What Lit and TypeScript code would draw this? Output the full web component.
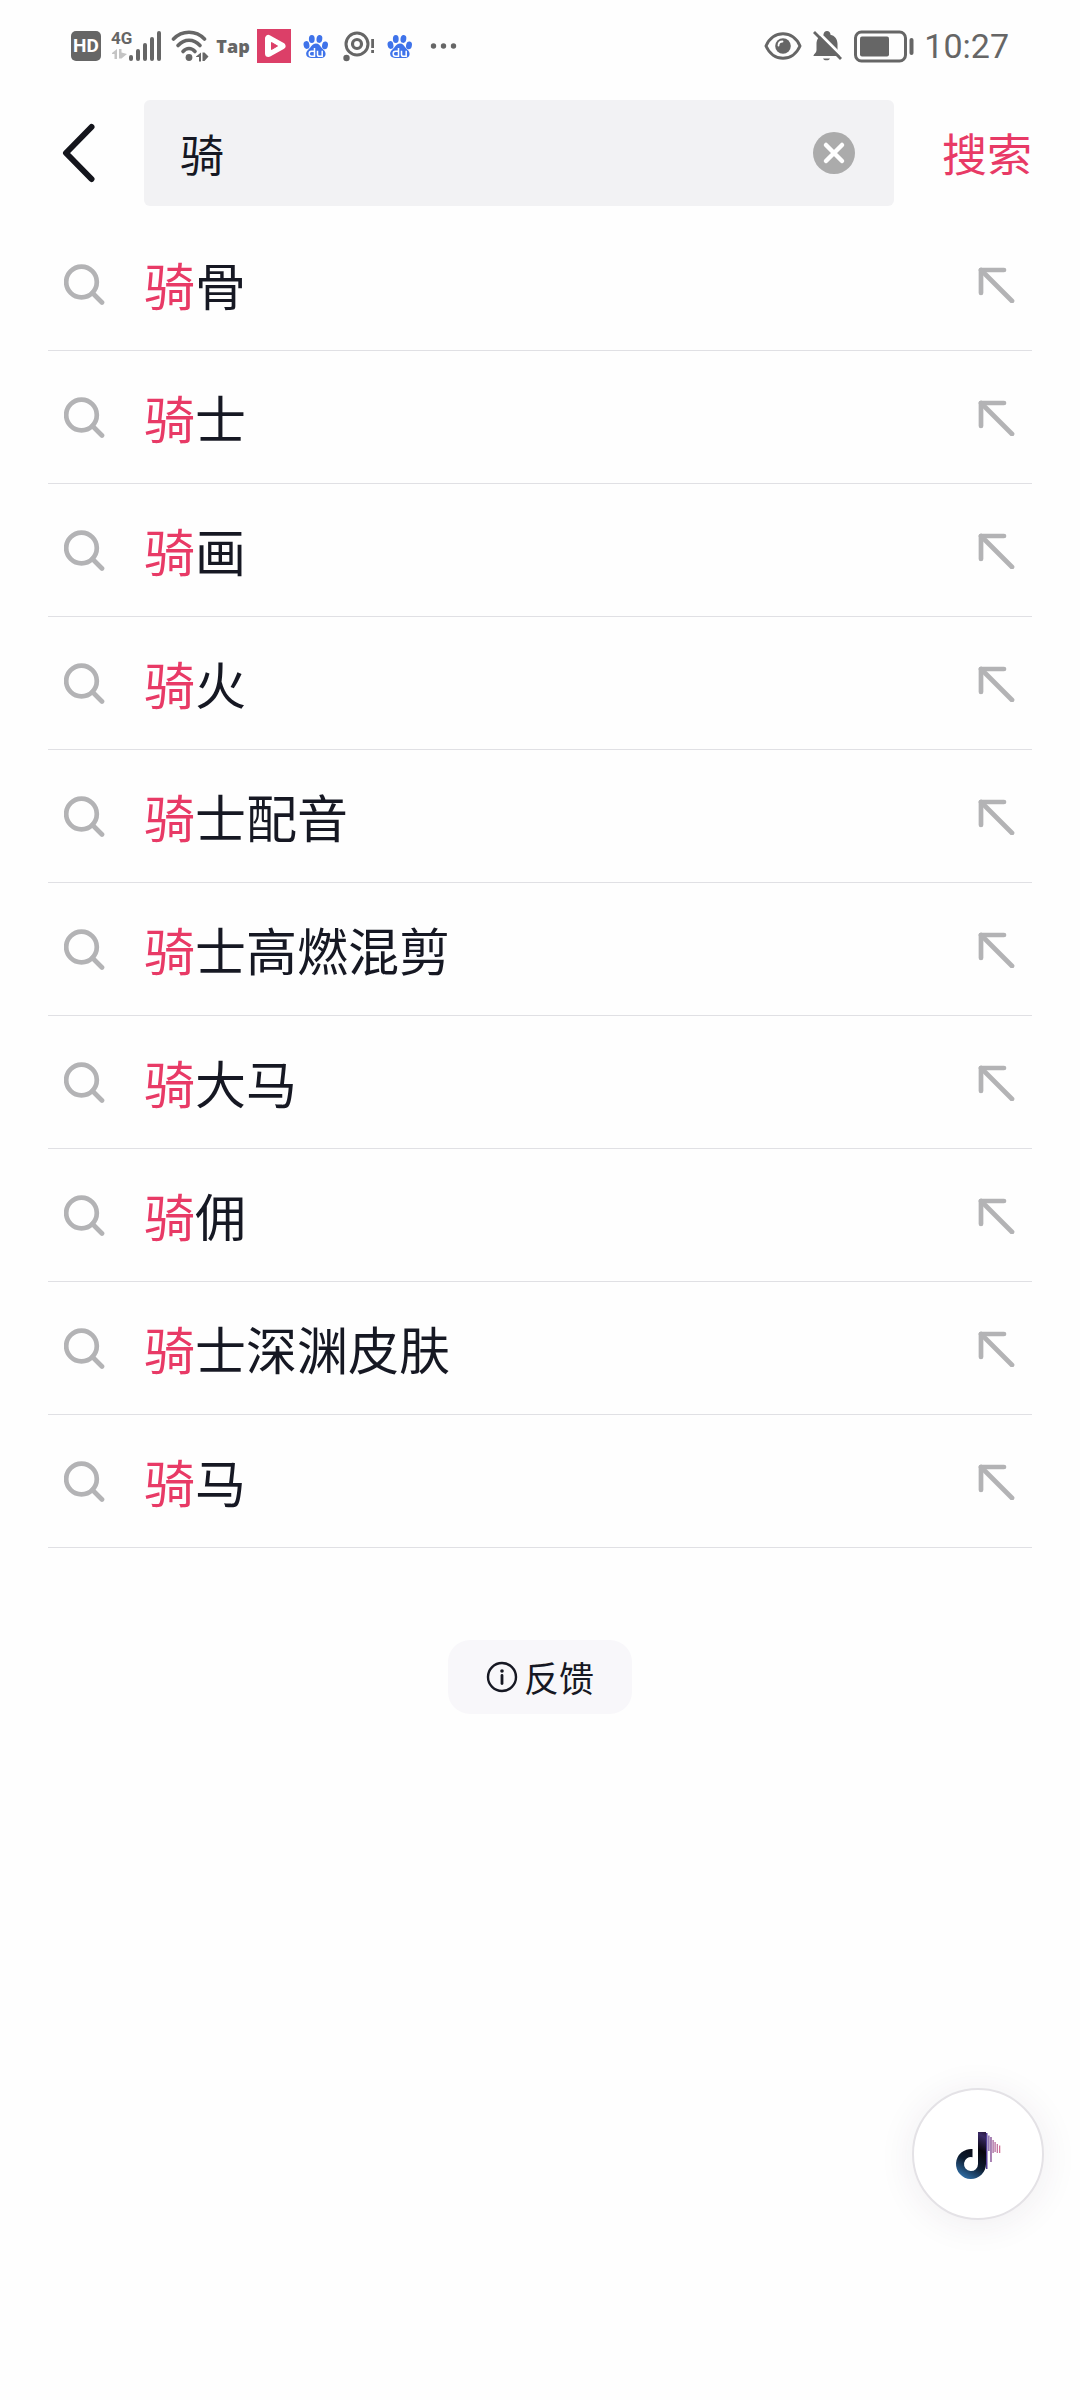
import { LitElement, html, css } from "lit";
import { customElement, property, state } from "lit/decorators.js";

const pawIcon = html`<svg class="icon" width="34" height="34" viewBox="0 0 34 34" role="img" aria-label="百度">
  <g fill="#3f73ea">
    <ellipse cx="7.500" cy="16" rx="2.900" ry="3.900" transform="rotate(-12 7.500 16)" />
    <ellipse cx="12.800" cy="9.900" rx="2.900" ry="4" />
    <ellipse cx="20.400" cy="9.900" rx="2.900" ry="4" transform="rotate(8 20.400 9.900)" />
    <ellipse cx="26" cy="16.400" rx="2.900" ry="3.900" transform="rotate(12 26 16.400)" />
    <path d="M16.800 14.500c3 0 4.200 2.200 5.800 4.200 1.800 2 4 3.500 4 6 0 3-2.200 4.300-4.800 4.300H12c-2.800 0-4.900-1.500-4.900-4.400 0-2.500 2.200-3.900 4-5.900 1.500-1.900 2.700-4.200 5.700-4.200z" />
  </g>
  <g fill="none" stroke="#fff" stroke-width="1.500">
    <path d="M15.500 19v8.200h-3c-1.500 0-2.300-.9-2.300-2.500s.8-2.500 2.300-2.500h3" />
    <path d="M18.500 21.800v3.600c0 1.200.6 1.800 1.700 1.800h3v-5.400" />
  </g>
</svg>`;

@customElement("status-bar")
export class StatusBar extends LitElement {
  static styles = css`
    :host {
      display: flex;
      align-items: center;
      justify-content: space-between;
      height: 92px;
      padding: 0 71px;
      color: #666;
      font-family: Roboto, "Noto Sans", sans-serif;
    }
    .group {
      display: flex;
      align-items: center;
      gap: 8px;
    }
    .icon {
      display: block;
      flex: none;
    }
    .hd {
      box-sizing: border-box;
      width: 30px;
      height: 30px;
      margin-right: 2px;
      border-radius: 5px;
      background: #666;
      color: #fff;
      font: 700 19px/30px Roboto, sans-serif;
      text-align: center;
    }
    .tap {
      width: 32px;
      display: flex;
      justify-content: center;
      font: 800 18px/24px "Open Sans", sans-serif;
    }
    .network {
      display: flex;
      width: 52px;
      height: 34px;
    }
    .generation {
      display: flex;
      flex-direction: column;
      width: 18px;
      font: 700 17px/18px "Liberation Sans Narrow", Roboto, sans-serif;
    }
    .time {
      font-size: 34px;
      line-height: 40px;
      padding-left: 2px;
    }
  `;

  render() {
    return html`
      <div class="group">
        <span class="hd">HD</span>
        <div class="network">
          <div class="generation">
            <span>4G</span>
            <svg class="icon" width="18" height="14" viewBox="0 0 18 14" aria-hidden="true">
              <path d="M1 6l5-4v10H3.500V7H1zM8 2h2.500v3.500L16 7l-5.500 4.500H8z" fill="#c4c4c4" />
            </svg>
          </div>
          <svg class="icon" width="34" height="34" viewBox="18 0 34 34" role="img" aria-label="信号">
            <g fill="#666">
              <rect x="18" y="26" width="4" height="6" rx="2" />
              <rect x="25" y="20" width="4" height="12" rx="2" />
              <rect x="32" y="14" width="4" height="18" rx="2" />
              <rect x="39" y="8" width="4" height="24" rx="2" />
              <rect x="46" y="2" width="4" height="30" rx="2" />
            </g>
          </svg>
        </div>
        <svg class="icon" width="38" height="34" viewBox="0 0 38 34" role="img" aria-label="Wi-Fi">
          <g fill="none" stroke="#666" stroke-width="3.600" stroke-linecap="round">
            <path d="M2.500 10C11 1 25 1 33.500 10" />
            <path d="M7 16.500c6.500-7 15.500-7 22 0" />
            <path d="M12 22.500c3.500-4 8.500-4 12 0" />
          </g>
          <circle cx="18" cy="28.500" r="3.400" fill="#666" />
          <path d="M25 27.500l5-4v9h-2V28h-3zM31.500 23.500h2l4 4-4 4.500h-2z" fill="#666" />
        </svg>
        <span class="tap">Tap</span>
        <svg class="icon" width="34" height="34" viewBox="0 0 34 34" role="img" aria-label="视频">
          <rect width="34" height="34" fill="#dc3f68" />
          <path d="M11.500 9.500v15l13.500-7.500z" fill="#fff" stroke="#fff" stroke-width="7" stroke-linejoin="round" />
          <path d="M14.500 13.500v7l6-3.500z" fill="#dc3f68" stroke="#dc3f68" stroke-linejoin="round" />
        </svg>
        ${pawIcon}
        <svg class="icon" width="34" height="34" viewBox="0 0 34 34" role="img" aria-label="提醒">
          <g fill="none" stroke="#666">
            <circle cx="16" cy="15" r="11" stroke-width="3" />
            <circle cx="16" cy="15" r="4.500" stroke-width="3.200" />
          </g>
          <circle cx="5.500" cy="29" r="3.200" fill="#666" />
          <path d="M30.200 10h2.800v9h-2.800zM30.200 21h2.800v3h-2.800z" fill="#666" />
        </svg>
        ${pawIcon}
        <svg class="icon" width="34" height="34" viewBox="0 0 34 34" role="img" aria-label="更多">
          <g fill="#666">
            <circle cx="8.500" cy="17" r="2.700" />
            <circle cx="18.500" cy="17" r="2.700" />
            <circle cx="28.500" cy="17" r="2.700" />
          </g>
        </svg>
      </div>
      <div class="group">
        <svg class="icon" width="38" height="34" viewBox="0 0 38 34" role="img" aria-label="护眼">
          <path d="M2 17C9 .7 29 .7 36 17 29 33.300 9 33.300 2 17z" fill="none" stroke="#666" stroke-width="3" stroke-linejoin="round" />
          <circle cx="19" cy="17" r="7.800" fill="#666" />
          <path d="M14.500 16.500c0-2.500 1.500-4 4-4" fill="none" stroke="#fff" stroke-width="1.800" stroke-linecap="round" />
        </svg>
        <svg class="icon" width="34" height="34" viewBox="0 0 34 34" role="img" aria-label="静音">
          <path d="M3.500 27c0-2 3-3 3-6v-6c0-5 3-8.500 7-9.300C13.500 3.500 15 2 17 2s3.500 1.500 3.500 3.700c4 .8 7 4.300 7 9.300v6c0 3 3 4 3 6z" fill="#666" />
          <path d="M13 29.500h7c-.5 1.300-1.800 1.800-3.500 1.800s-3-.5-3.500-1.800z" fill="#666" />
          <path d="M6 1l27 27" stroke="#fff" stroke-width="3" />
          <path d="M4 3l27 27" stroke="#666" stroke-width="2.800" />
        </svg>
        <svg class="icon" width="62" height="34" viewBox="-1 0 62 34" role="img" aria-label="电量">
          <rect x="2.500" y="3" width="50" height="29" rx="6" fill="none" stroke="#666" stroke-width="3" />
          <rect x="7" y="7.500" width="29" height="20" rx="2" fill="#666" />
          <rect x="56.500" y="9" width="4" height="17" rx="2" fill="#666" />
        </svg>
        <span class="time">10:27</span>
      </div>
    `;
  }
}

@customElement("search-header")
export class SearchHeader extends LitElement {
  static styles = css`
    :host {
      display: flex;
      align-items: center;
      padding: 8px 48px 12px;
      font-family: "Noto Sans CJK SC", sans-serif;
    }
    button {
      flex: none;
      border: 0;
      padding: 0;
      background: none;
      font-family: inherit;
      cursor: pointer;
    }
    svg {
      display: block;
    }
    .back {
      width: 96px;
      padding-left: 8px;
    }
    .field {
      flex: 1;
      min-width: 0;
      display: flex;
      align-items: center;
      height: 106px;
      padding: 0 38px 0 36px;
      box-sizing: border-box;
      border-radius: 6px;
      background: #f2f2f4;
    }
    .input {
      flex: 1;
      min-width: 0;
      border: 0;
      padding: 0;
      outline: none;
      background: none;
      color: #161823;
      font-family: inherit;
      font-size: 44px;
      line-height: 64px;
    }
    .submit {
      margin-left: 48px;
      color: #e83a66;
      font-size: 45px;
      line-height: 64px;
    }
  `;

  @property() value = "";

  private clear() {
    this.value = "";
  }

  render() {
    return html`
      <button class="back" type="button" aria-label="返回">
        <svg width="48" height="60" viewBox="0 0 48 60">
          <path d="M35.500 4L10 30l25.500 26" fill="none" stroke="#14151c" stroke-width="6" stroke-linecap="round" stroke-linejoin="round" />
        </svg>
      </button>
      <div class="field">
        <input
          class="input"
          type="text"
          aria-label="搜索"
          .value=${this.value}
          @input=${(e: Event) => (this.value = (e.target as HTMLInputElement).value)}
        />
        <button type="button" aria-label="清除" @click=${this.clear}>
          <svg width="44" height="44" viewBox="0 0 44 44">
            <circle cx="22" cy="22" r="21" fill="#ababab" />
            <path d="M14 14l16 16M30 14L14 30" stroke="#fff" stroke-width="4.500" stroke-linecap="round" />
          </svg>
        </button>
      </div>
      <button class="submit" type="button">搜索</button>
    `;
  }
}

@customElement("suggestion-row")
export class SuggestionRow extends LitElement {
  static styles = css`
    :host {
      display: block;
      border-bottom: 1px solid #e0e0e4;
      font-family: "Noto Sans CJK SC", sans-serif;
    }
    .row {
      display: flex;
      align-items: center;
      height: 132px;
      padding: 0 16px;
    }
    a {
      flex: 1;
      display: flex;
      align-items: center;
      gap: 38px;
      color: #161823;
      text-decoration: none;
      font-size: 51px;
      line-height: 72px;
    }
    .match {
      color: #e83a66;
    }
    svg {
      display: block;
      flex: none;
    }
    button {
      border: 0;
      padding: 0;
      background: none;
      cursor: pointer;
    }
  `;

  @property() match = "";
  @property() rest = "";

  render() {
    return html`
      <div class="row">
        <a href="#">
          <svg width="42" height="42" viewBox="0 0 42 42" fill="none" stroke="#b3b3b5" stroke-width="4.700">
            <circle cx="17.500" cy="19" r="15.300" />
            <path d="M28.500 30L38 39.500" stroke-linecap="round" />
          </svg>
          <span class="text"><span class="match">${this.match}</span>${this.rest}</span>
        </a>
        <button type="button" aria-label="填入">
          <svg width="38" height="38" viewBox="0 0 38 38" fill="none" stroke="#b3b3b5" stroke-width="4.700" stroke-linecap="round" stroke-linejoin="round">
            <path d="M26 5H3v23" />
            <path d="M3 5l31 31" />
          </svg>
        </button>
      </div>
    `;
  }
}

@customElement("app-root")
export class AppRoot extends LitElement {
  static styles = css`
    :host {
      display: block;
      position: relative;
      min-height: 100vh;
      background: #fefefe;
      font-family: "Noto Sans CJK SC", sans-serif;
    }
    .list {
      list-style: none;
      margin: 0;
      padding: 0 48px;
    }
    .footer {
      display: flex;
      justify-content: center;
      padding: 92px 48px;
    }
    .feedback {
      display: flex;
      align-items: center;
      gap: 6px;
      height: 74px;
      padding: 0 38px;
      border: 0;
      border-radius: 22px;
      background: #f8f7fa;
      color: #161823;
      font-family: inherit;
      font-size: 35px;
      line-height: 52px;
      cursor: pointer;
    }
    .feedback svg {
      display: block;
    }
    .float {
      position: absolute;
      right: 36px;
      bottom: 180px;
      width: 132px;
      height: 132px;
      display: grid;
      place-items: center;
      padding: 0;
      border: 2px solid #e4e2e6;
      border-radius: 50%;
      background: #fff;
      box-shadow: 0 4px 36px rgba(60, 40, 80, 0.08);
      cursor: pointer;
    }
  `;

  @state() private suggestions = ["骨", "士", "画", "火", "士配音", "士高燃混剪", "大马", "佣", "士深渊皮肤", "马"];

  render() {
    return html`
      <status-bar></status-bar>
      <search-header value="骑"></search-header>
      <ul class="list">
        ${this.suggestions.map((rest) => html`<li><suggestion-row match="骑" rest=${rest}></suggestion-row></li>`)}
      </ul>
      <div class="footer">
        <button class="feedback" type="button">
          <svg width="32" height="32" viewBox="0 0 32 32">
            <circle cx="16" cy="16" r="14" fill="none" stroke="#161823" stroke-width="2.400" />
            <circle cx="16" cy="10" r="1.800" fill="#161823" />
            <path d="M16 14.500v8" stroke="#161823" stroke-width="2.800" stroke-linecap="round" />
          </svg>
          反馈
        </button>
      </div>
      <button class="float" type="button" aria-label="抖音">
        <svg width="48" height="52" viewBox="0 0 48 52">
          <defs>
            <linearGradient id="noteFill" gradientUnits="userSpaceOnUse" x1="6" y1="50" x2="32" y2="4">
              <stop offset="0" stop-color="#3478b4" />
              <stop offset="0.350" stop-color="#0d1c30" />
              <stop offset="0.650" stop-color="#08060f" />
              <stop offset="0.900" stop-color="#3a2a66" />
              <stop offset="1" stop-color="#2a1a3c" />
            </linearGradient>
            <linearGradient id="barFill" gradientUnits="userSpaceOnUse" x1="32" y1="0" x2="47" y2="0">
              <stop offset="0" stop-color="#4b3a96" />
              <stop offset="0.500" stop-color="#a35a94" />
              <stop offset="1" stop-color="#d9799c" />
            </linearGradient>
          </defs>
          <path d="M24 4h8v32a15 15 0 1 1-13.500-14.900v8.100a7 7 0 1 0 5.500 6.800z" fill="url(#noteFill)" />
          <path
            d="M32 5h1.500v36H32zM34.300 7.500h1.200V23h-1.200zM36.300 9h1.400v25h-1.400zM38.500 12h1.200v13h-1.200zM40.500 14h1.200v10h-1.200zM42.700 16h1.200v9h-1.200zM45 17.500h1.300V25H45z"
            fill="url(#barFill)"
          />
        </svg>
      </button>
    `;
  }
}
